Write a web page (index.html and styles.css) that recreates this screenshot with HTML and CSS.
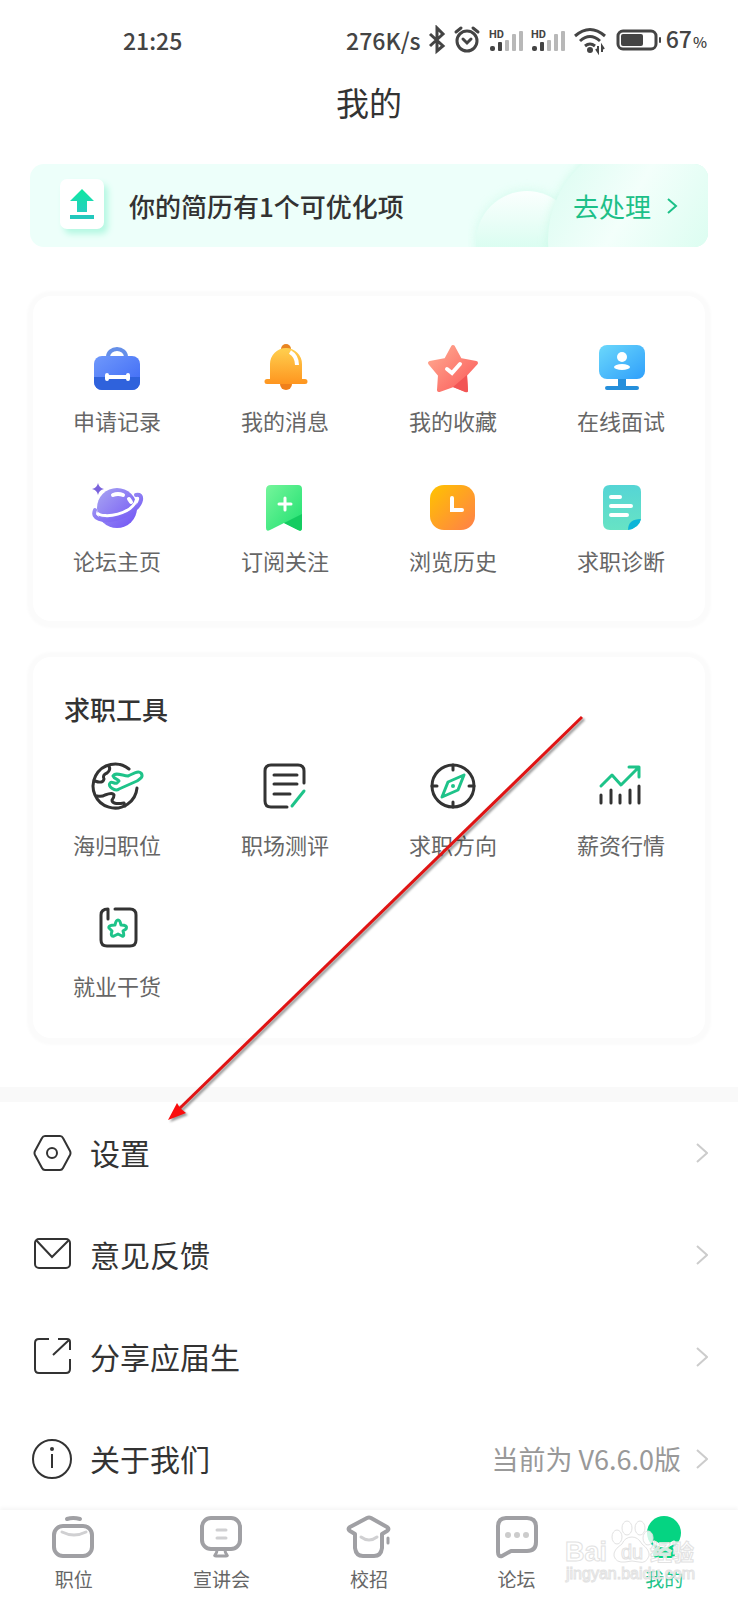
FILE: index.html
```html
<!DOCTYPE html>
<html lang="zh-CN">
<head>
    <meta charset="UTF-8">
    <meta name="viewport" content="width=device-width, initial-scale=1.0">
    <title>我的</title>
    <link rel="stylesheet" href="styles.css">
</head>
<body>
    <div class="page">
        <div class="status-bar">
            <span class="time">21:25</span>
            <div class="status-icons">
                <span>276K/s</span>
                <svg width="24" height="30" viewBox="0 0 24 30" fill="none" stroke="#444" stroke-width="3"><path d="M5 9l13 12-6 5V3l6 6L5 21"/></svg>
                <svg width="30" height="30" viewBox="0 0 30 30" fill="none" stroke="#444" stroke-width="3" stroke-linecap="round"><circle cx="14" cy="16" r="10"/><path d="M10 14l4 4 4-4M3 7l5-4M25 7l-5-4"/></svg>
                <svg width="38" height="30" viewBox="0 0 38 30"><text class="hd" x="2" y="13">HD</text><g fill="#444"><rect x="3" y="21" width="5" height="5" rx="2"/><rect x="11" y="17" width="4" height="9" rx="1"/></g><g fill="#b8b8b8"><rect x="18" y="15" width="4" height="11" rx="1"/><rect x="25" y="9" width="4" height="17" rx="1"/><rect x="32" y="6" width="4" height="20" rx="1"/></g></svg>
                <svg width="38" height="30" viewBox="0 0 38 30"><text class="hd" x="2" y="13">HD</text><g fill="#444"><rect x="3" y="21" width="5" height="5" rx="2"/><rect x="11" y="17" width="4" height="9" rx="1"/></g><g fill="#b8b8b8"><rect x="18" y="15" width="4" height="11" rx="1"/><rect x="25" y="9" width="4" height="17" rx="1"/><rect x="32" y="6" width="4" height="20" rx="1"/></g></svg>
                <svg width="40" height="30" viewBox="0 0 40 30" fill="none" stroke="#444" stroke-width="3"><path d="M4 11Q19-2 34 11M9 16q10-9 20 0M14 21q5-4 10 0"/><circle cx="19" cy="25" r="3" fill="#444" stroke="none"/><path d="M27 21v6l-2-3M31 27v-6l2 3" stroke-width="2"/></svg>
                <svg width="47" height="30" viewBox="0 0 47 30"><rect x="3" y="6" width="38" height="18" rx="5" fill="none" stroke="#444" stroke-width="3"/><rect x="6" y="9" width="22" height="12" rx="2" fill="#444"/><rect x="44" y="12" width="2" height="6" rx="1" fill="#444"/></svg>
                <span>67<small>%</small></span>
            </div>
        </div>

        <h1 class="title">我的</h1>

        <a class="banner" href="#">
            <svg class="banner-bg" width="240" height="83" viewBox="0 0 240 83">
                <defs>
                    <linearGradient id="bubble" x1="0" y1="0" x2="0" y2="0.6">
                        <stop offset="0" stop-color="#fbfffe"/>
                        <stop offset="1" stop-color="#d8fdf0"/>
                    </linearGradient>
                    <linearGradient id="bubble-big" x1="0.1" y1="0.2" x2="0.8" y2="0.6">
                        <stop offset="0" stop-color="#e2fdf4"/>
                        <stop offset="0.4" stop-color="#f3fffb"/>
                        <stop offset="1" stop-color="#dafdf0"/>
                    </linearGradient>
                    <filter id="soft"><feGaussianBlur stdDeviation="4"/></filter>
                </defs>
                <circle cx="59" cy="78" r="53" fill="#cffaea" opacity="0.6" filter="url(#soft)"/>
                <circle cx="59" cy="78" r="51" fill="url(#bubble)"/>
                <circle cx="182" cy="76" r="103" fill="#c8f9e6" opacity="0.7" filter="url(#soft)"/>
                <circle cx="182" cy="76" r="102" fill="url(#bubble-big)"/>
            </svg>
            <span class="upload">
                <svg width="26" height="32" viewBox="0 0 26 32">
                    <defs><linearGradient id="up" x1="0" y1="0" x2="0" y2="1"><stop offset="0" stop-color="#0de8a0"/><stop offset="1" stop-color="#25cfc0"/></linearGradient></defs>
                    <path d="M13 1l12 12h-7v11H8V13H1z" fill="url(#up)"/>
                    <rect x="1" y="27" width="24" height="4" fill="#23c8bd"/>
                </svg>
            </span>
            <span class="banner-text">你的简历有1个可优化项</span>
            <span class="banner-action">去处理</span>
            <svg class="banner-arrow" width="12" height="18" viewBox="0 0 12 18" fill="none" stroke="#1cc088" stroke-width="2"><path d="M2 2l8 7-8 7"/></svg>
        </a>

        <div class="card grid">
            <a class="item" href="#">
                <svg viewBox="0 0 56 56">
                    <defs><linearGradient id="g1" x1="0" y1="0" x2="1" y2="1"><stop offset="0" stop-color="#6f98fb"/><stop offset="1" stop-color="#3d69f5"/></linearGradient></defs>
                    <path d="M19 18v-1a9 8 0 0 1 18 0v1" fill="none" stroke="#658fe8" stroke-width="4"/>
                    <rect x="5" y="16" width="46" height="34" rx="8" fill="url(#g1)"/>
                    <path d="M5 37h46v5a8 8 0 0 1-8 8H13a8 8 0 0 1-8-8z" fill="#2f62dc"/>
                    <path d="M19 37h19M18 35v4M39 35v4" stroke="#fff" stroke-width="4" stroke-linecap="round"/>
                </svg>
                <span>申请记录</span>
            </a>
            <a class="item" href="#">
                <svg viewBox="0 0 56 56">
                    <defs><linearGradient id="g2" x1="0" y1="0" x2="0" y2="1"><stop offset="0" stop-color="#ffd04f"/><stop offset="1" stop-color="#fe951f"/></linearGradient></defs>
                    <circle cx="29" cy="9" r="5" fill="#e88421"/>
                    <circle cx="29" cy="44" r="6" fill="#f0801b"/>
                    <path d="M13 39V24a16 16 0 0 1 32 0v15h3a2 2 0 0 1 0 5H10a2 2 0 0 1 0-5z" fill="url(#g2)"/>
                    <path d="M33 12q7 4 7 13" fill="none" stroke="#fff" stroke-width="4"/>
                </svg>
                <span>我的消息</span>
            </a>
            <a class="item" href="#">
                <svg viewBox="0 0 56 56">
                    <defs><linearGradient id="g3" x1="0" y1="0" x2="1" y2="1"><stop offset="0" stop-color="#ffab91"/><stop offset="1" stop-color="#fb5a5a"/></linearGradient></defs>
                    <path d="M28 7l7 13 16 3-11 12 1 15-13-5-14 5 1-15L5 23l16-3z" fill="url(#g3)" stroke="url(#g3)" stroke-width="4" stroke-linejoin="round"/>
                    <path d="M28 47l14-12 1 16q0 2-3 1z" fill="#f25555"/>
                    <path d="M22 29l5 4 8-9" fill="none" stroke="#fff" stroke-width="4" stroke-linecap="round"/>
                </svg>
                <span>我的收藏</span>
            </a>
            <a class="item" href="#">
                <svg viewBox="0 0 56 56">
                    <defs><linearGradient id="g4" x1="0" y1="0" x2="1" y2="1"><stop offset="0" stop-color="#6bd8fb"/><stop offset="1" stop-color="#2f9ffb"/></linearGradient></defs>
                    <path d="M29 38v9M14 48h30" stroke="#258fdb" stroke-width="4" stroke-linecap="round"/>
                    <path d="M29 38v9" stroke="#258fdb" stroke-width="8"/>
                    <rect x="6" y="5" width="46" height="34" rx="8" fill="url(#g4)"/>
                    <circle cx="29" cy="17" r="5" fill="#fff"/>
                    <ellipse cx="29" cy="27" rx="8" ry="3" fill="#fff"/>
                </svg>
                <span>在线面试</span>
            </a>
            <a class="item" href="#">
                <svg viewBox="0 0 56 56">
                    <defs><linearGradient id="g5" x1="0" y1="0" x2="1" y2="1"><stop offset="0" stop-color="#a9a6f2"/><stop offset="1" stop-color="#7052f5"/></linearGradient></defs>
                    <circle cx="28" cy="28" r="20" fill="url(#g5)"/>
                    <path d="M6 30C2 39 14 42 26 39S50 29 52 20Q53 14 47 15" fill="none" stroke="url(#g5)" stroke-width="4" stroke-linecap="round"/>
                    <path d="M8 33C14 39 44 35 48 18" fill="none" stroke="#fff" stroke-width="3"/>
                    <path d="M24 15q5-2 10 0M40 19l2 3" fill="none" stroke="#fff" stroke-width="4" stroke-linecap="round"/>
                    <path d="M9 3q1 5 6 6-5 1-6 6-1-5-6-6 5-1 6-6z" fill="#7a62dc"/>
                </svg>
                <span>论坛主页</span>
            </a>
            <a class="item" href="#">
                <svg viewBox="0 0 56 56">
                    <defs><linearGradient id="g6" x1="0" y1="0" x2="1" y2="1"><stop offset="0" stop-color="#75f59b"/><stop offset="1" stop-color="#1fe070"/></linearGradient></defs>
                    <path d="M14 5h27q4 0 4 4v39q0 4-4 2l-14-7-14 7q-4 2-4-2V10q0-5 5-5z" fill="url(#g6)"/>
                    <path d="M27 43l18-9v14q0 4-4 2z" fill="#14cc61"/>
                    <path d="M28 18v12M22 24h12" stroke="#fff" stroke-width="3" stroke-linecap="round"/>
                </svg>
                <span>订阅关注</span>
            </a>
            <a class="item" href="#">
                <svg viewBox="0 0 56 56">
                    <defs><linearGradient id="g7" x1="0" y1="0" x2="1" y2="1"><stop offset="0.1" stop-color="#ffbd06"/><stop offset="1" stop-color="#ff7f4a"/></linearGradient></defs>
                    <rect x="5" y="5" width="45" height="45" rx="14" fill="url(#g7)"/>
                    <path d="M27 18v12h10" fill="none" stroke="#fff" stroke-width="4" stroke-linecap="round"/>
                </svg>
                <span>浏览历史</span>
            </a>
            <a class="item" href="#">
                <svg viewBox="0 0 56 56">
                    <defs><linearGradient id="g8" x1="0" y1="0" x2="0" y2="1"><stop offset="0" stop-color="#55d5d5"/><stop offset="1" stop-color="#67e3c4"/></linearGradient></defs>
                    <path d="M17 5h24q7 0 7 7v27q-2 9-13 11H17q-7 0-7-7V12q0-7 7-7z" fill="url(#g8)"/>
                    <path d="M35 50q0-11 13-11-2 9-13 11z" fill="#0bb5d8"/>
                    <path d="M18 17h9M18 26h20M18 35h16" stroke="#fff" stroke-width="4" stroke-linecap="round"/>
                </svg>
                <span>求职诊断</span>
            </a>
        </div>

        <div class="card tools">
            <h2>求职工具</h2>
            <div class="grid">
                <a class="item" href="#">
                    <svg class="line" viewBox="0 0 56 56">
                        <path d="M40 11A22 22 0 1 0 48 30"/>
                        <path d="M20 8q2 4-2 7-5 2-3 6-1 5-9 2M8 38q5 1 8-1 8-3 9 0 0 3-2 5 0 5 12 3l1 3"/>
                        <path class="green" d="M52 15c3 4-1 6-4 8l-18 8c-4 3-12-3-9-6 2-2 4 1 7 0l2-2c-1-2-5-2-6-5 2-4 8-1 15 0 5-2 10-6 13-3z"/>
                    </svg>
                    <span>海归职位</span>
                </a>
                <a class="item" href="#">
                    <svg class="line" viewBox="0 0 56 56">
                        <path d="M47 25V13q0-6-6-6H14q-6 0-6 6v30q0 6 6 6h16M17 17h23M17 26h23M17 36h16"/>
                        <path class="green" d="M47 33L35 48"/>
                    </svg>
                    <span>职场测评</span>
                </a>
                <a class="item" href="#">
                    <svg class="line" viewBox="0 0 56 56">
                        <circle cx="28" cy="28" r="21"/>
                        <path d="M28 7v5M28 44v5M7 28h5M44 28h5"/>
                        <path class="green" d="M39 17l-16 7-6 15 16-7z"/>
                        <circle class="dot" cx="28" cy="28" r="2"/>
                    </svg>
                    <span>求职方向</span>
                </a>
                <a class="item" href="#">
                    <svg class="line" viewBox="0 0 56 56">
                        <path d="M8 37v8M18 32v13M27 37v8M37 32v13M46 28v17"/>
                        <path class="green" d="M8 28l11-11 9 10L45 10M36 9h10v10"/>
                    </svg>
                    <span>薪资行情</span>
                </a>
                <a class="item" href="#">
                    <svg class="line" viewBox="0 0 56 56">
                        <path d="M26 10h15q6 0 6 6v25q0 6-6 6H18q-6 0-6-6V16q0-6 7-6v10"/>
                        <path class="green" d="M29 21q2 0 3 5 7 0 5 4l-3 2q2 6-1 5l-4-2-4 2q-4 1-2-5l-3-3q-1-3 6-3 1-5 3-5z"/>
                    </svg>
                    <span>就业干货</span>
                </a>
            </div>
        </div>

        <div class="list">
            <a class="row" href="#">
                <svg class="row-icon" viewBox="0 0 40 40"><path d="M13 3h15q2 0 3 2l7 13q1 2 0 4l-7 13q-1 2-3 2H13q-2 0-3-2L3 22q-1-2 0-4l7-13q1-2 3-2z"/><circle cx="20" cy="20" r="5"/></svg>
                <span class="row-text">设置</span>
                <svg class="arrow" viewBox="0 0 12 20"><path d="M1 1l10 9-10 9"/></svg>
            </a>
            <a class="row" href="#">
                <svg class="row-icon" viewBox="0 0 40 40"><rect x="3" y="4" width="35" height="29" rx="4"/><path d="M4 5l16 17L37 5"/></svg>
                <span class="row-text">意见反馈</span>
                <svg class="arrow" viewBox="0 0 12 20"><path d="M1 1l10 9-10 9"/></svg>
            </a>
            <a class="row" href="#">
                <svg class="row-icon" viewBox="0 0 40 40"><path d="M17 2H7Q3 2 3 6v26q0 4 4 4h27q4 0 4-4V22M26 2h9q3 0 3 3v8M21 18L37 3"/></svg>
                <span class="row-text">分享应届生</span>
                <svg class="arrow" viewBox="0 0 12 20"><path d="M1 1l10 9-10 9"/></svg>
            </a>
            <a class="row" href="#">
                <svg class="row-icon" viewBox="0 0 40 40"><circle cx="20" cy="20" r="19"/><path d="M20 15v14"/><circle cx="20" cy="10" r="1"/></svg>
                <span class="row-text">关于我们</span>
                <span class="version">当前为 V6.6.0版</span>
                <svg class="arrow" viewBox="0 0 12 20"><path d="M1 1l10 9-10 9"/></svg>
            </a>
        </div>

        <nav class="tabs">
            <a href="#">
                <svg viewBox="0 0 46 46"><rect x="3" y="12" width="38" height="30" rx="9"/><path d="M16 5q6-2 13 0"/><path class="light" d="M11 18q12 6 24 0"/></svg>
                <span>职位</span>
            </a>
            <a href="#">
                <svg viewBox="0 0 46 46"><rect x="4" y="4" width="38" height="31" rx="9"/><path d="M19 36q0 3-2 5-1 1 1 1h10q2 0 1-1-2-2-2-5" stroke-width="3"/><path class="light" d="M19 16h9M19 24h9"/></svg>
                <span>宣讲会</span>
            </a>
            <a href="#">
                <svg viewBox="0 0 46 46"><path d="M21 4q2-1 4 0l16 9q3 2 0 4l-5 3v14q-1 8-8 8H17q-7 0-8-8V20l-5-3q-3-2 0-4z"/><path d="M42 24v5" stroke-width="3"/><path class="light" d="M15 23q8 6 16 0"/></svg>
                <span>校招</span>
            </a>
            <a href="#">
                <svg viewBox="0 0 46 46"><path d="M12 4h21q9 0 9 9v15q0 9-9 9H17l-9 5q-4 1-4-4V13q0-9 8-9z"/><g fill="#ccc" stroke="none"><circle cx="14" cy="21" r="3"/><circle cx="23" cy="21" r="3"/><circle cx="32" cy="21" r="3"/></g></svg>
                <span>论坛</span>
            </a>
            <a class="active" href="#">
                <svg viewBox="0 0 46 46"><g fill="#05d482" stroke="none"><circle cx="23" cy="19" r="17"/><path d="M12 40q0-9 11-9t11 9q0 4-4 4H16q-4 0-4-4z"/></g><path d="M13 28q10 8 20 0" stroke="#fff" stroke-width="3"/></svg>
                <span>我的</span>
            </a>
        </nav>

        <!-- arrow pointing at the settings row -->
        <svg class="pointer" width="440" height="430" viewBox="0 0 440 430">
            <path d="M422 11L18 404" stroke="#e01414" stroke-width="3"/>
            <path d="M8 414l9-17 3 5 6 5z" fill="#fa0d0d"/>
        </svg>

        <svg class="watermark" width="138" height="66" viewBox="0 0 138 66">
            <g fill="#fff" fill-opacity="0.8" stroke="#e2e2e2" stroke-width="1">
                <ellipse cx="53" cy="19" rx="5" ry="7"/>
                <ellipse cx="63" cy="10" rx="5" ry="7"/>
                <ellipse cx="76" cy="10" rx="5" ry="7"/>
                <ellipse cx="84" cy="20" rx="5" ry="7"/>
                <path d="M68 19q6 0 10 7 8 6 7 12-3 8-10 6-7-2-14 0-9 1-11-6-1-6 8-12 3-7 10-7z"/>
                <text class="wm-big" x="1" y="43">Bai</text>
                <text class="wm-du" x="57" y="41">du</text>
                <text class="wm-cn" x="86" y="42">经验</text>
                <text class="wm-url" x="2" y="61">jingyan.baidu.com</text>
            </g>
        </svg>
    </div>
</body>
</html>
```
FILE: styles.css
```css
* {
    box-sizing: border-box;
    margin: 0;
    padding: 0;
}

body {
    background-color: #fff;
    color: #333;
    font-family: "Noto Sans CJK SC", sans-serif;
}

a {
    color: inherit;
    text-decoration: none;
}

svg {
    display: block;
    flex-shrink: 0;
}

.page {
    position: relative;
    overflow: hidden;
}

.status-bar {
    display: flex;
    justify-content: space-between;
    align-items: center;
    height: 80px;
    padding: 0 31px 0 123px;
    font-size: 23px;
    font-weight: 500;
    line-height: 30px;
    color: #444;
}

.status-icons {
    display: flex;
    align-items: center;
    gap: 4px;
}

.status-icons small {
    margin-left: 1px;
    font-size: 15px;
}

.hd {
    font: 700 11px Roboto, sans-serif;
    fill: #444;
}

.title {
    font-size: 33px;
    font-weight: 400;
    line-height: 44px;
    text-align: center;
}

.banner {
    position: relative;
    display: flex;
    align-items: center;
    height: 83px;
    margin: 40px 30px 49px;
    padding: 0 30px;
    border-radius: 14px;
    background-color: #edfffa;
    overflow: hidden;
    font-size: 26px;
}

.banner-bg {
    position: absolute;
    right: 0;
    top: 0;
}

.banner-text {
    flex: 1;
    margin-left: 25px;
    font-weight: 500;
}

.banner-action,
.banner-arrow {
    position: relative;
    color: #1cc088;
}

.banner-arrow {
    margin-left: 15px;
}

.upload {
    display: flex;
    justify-content: center;
    align-items: center;
    width: 44px;
    height: 50px;
    margin-bottom: 3px;
    border-radius: 7px;
    background-color: #fff;
    box-shadow: 4px 5px 6px #b5f8e2;
}

.card {
    margin: 0 33px 36px;
    border-radius: 18px;
    background-color: #fff;
    box-shadow: 0 1px 3px 6px #fbfbfb;
}

.grid {
    display: grid;
    grid-template-columns: repeat(4, 1fr);
    row-gap: 44px;
}

.card.grid {
    padding: 44px 0 45px;
}

.item {
    display: flex;
    flex-direction: column;
    align-items: center;
    gap: 8px;
    font-size: 22px;
    line-height: 32px;
    color: #666;
}

.item svg {
    width: 56px;
    height: 56px;
}

.tools {
    padding: 34px 0 37px;
    margin-bottom: 49px;
}

.tools h2 {
    margin: 0 31px 31px;
    font-size: 26px;
    font-weight: 500;
    line-height: 36px;
}

.tools .grid {
    row-gap: 39px;
}

.tools .item {
    gap: 14px;
}

.line {
    fill: none;
    stroke: #333;
    stroke-width: 3;
    stroke-linecap: round;
    stroke-linejoin: round;
}

.line .green {
    stroke: #1ec389;
}

.line .dot {
    fill: #1ec389;
    stroke: none;
}

.list {
    border-top: 15px solid #f9f9f9;
}

.row {
    display: flex;
    align-items: center;
    height: 102px;
    padding: 0 30px 0 32px;
    font-size: 30px;
}

.row-icon {
    width: 40px;
    height: 40px;
    fill: none;
    stroke: #333;
    stroke-width: 2;
}

.row-text {
    flex: 1;
    margin-left: 18px;
    padding-bottom: 2px;
}

.version {
    margin-right: 15px;
    padding-bottom: 2px;
    font-size: 27px;
    color: #999;
}

.arrow {
    width: 12px;
    height: 20px;
    fill: none;
    stroke: #ccc;
    stroke-width: 2;
}

.tabs {
    position: relative;
    display: flex;
    padding: 4px 0 7px;
    background-color: #fff;
    box-shadow: 0 -2px 4px #f5f5f5;
}

.tabs a {
    flex: 1;
    display: flex;
    flex-direction: column;
    align-items: center;
    gap: 5px;
    font-size: 19px;
    line-height: 28px;
    color: #666;
}

.tabs svg {
    width: 46px;
    height: 46px;
    fill: none;
    stroke: #a0a0a4;
    stroke-width: 4;
    stroke-linecap: round;
    stroke-linejoin: round;
}

.tabs .light {
    stroke: #d0d0d2;
    stroke-width: 3;
}

.tabs .active {
    color: #1ec389;
}

.pointer {
    position: absolute;
    left: 160px;
    top: 706px;
    filter: drop-shadow(2px 2px 1px rgba(0, 0, 0, 0.4));
    pointer-events: none;
}

.watermark {
    position: absolute;
    right: 36px;
    bottom: 16px;
    pointer-events: none;
}

.wm-big {
    font: 700 27px "Liberation Sans", sans-serif;
}

.wm-du {
    font: 20px "Liberation Sans", sans-serif;
}

.wm-cn {
    font-size: 22px;
    font-weight: 700;
}

.wm-url {
    font: 16px "Liberation Sans", sans-serif;
    fill-opacity: 0.5;
}
```
